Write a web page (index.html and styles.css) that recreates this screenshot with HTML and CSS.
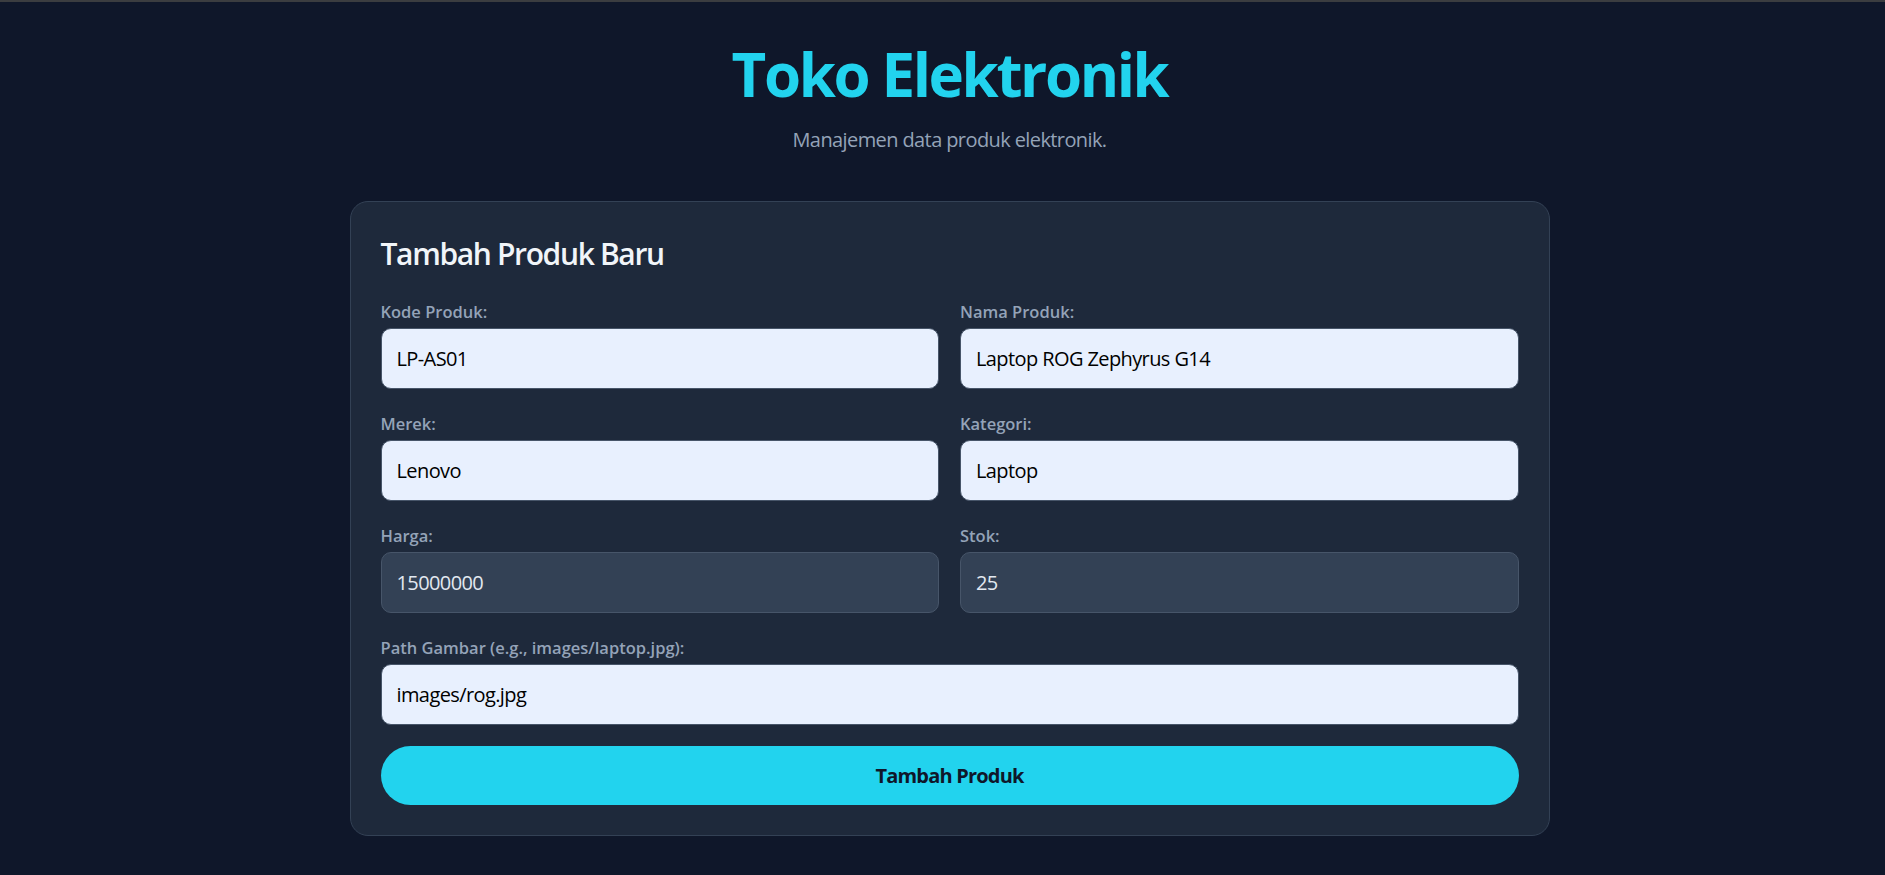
FILE: index.html
```html
<!DOCTYPE html>
<html lang="id">
<head>
<meta charset="utf-8">
<title>Toko Elektronik</title>
<link rel="stylesheet" href="styles.css">
</head>
<body>
<div class="page">
  <header class="header">
    <h1 class="title">Toko Elektronik</h1>
    <p class="subtitle">Manajemen data produk elektronik.</p>
  </header>
  <main class="card">
    <h2 class="card-title">Tambah Produk Baru</h2>
    <form class="form">
      <div class="field">
        <label class="label" for="kode">Kode Produk:</label>
        <input class="input input-filled" id="kode" type="text" value="LP-AS01">
      </div>
      <div class="field">
        <label class="label" for="nama">Nama Produk:</label>
        <input class="input input-filled" id="nama" type="text" value="Laptop ROG Zephyrus G14">
      </div>
      <div class="field">
        <label class="label" for="merek">Merek:</label>
        <input class="input input-filled" id="merek" type="text" value="Lenovo">
      </div>
      <div class="field">
        <label class="label" for="kategori">Kategori:</label>
        <input class="input input-filled" id="kategori" type="text" value="Laptop">
      </div>
      <div class="field">
        <label class="label" for="harga">Harga:</label>
        <input class="input input-dark" id="harga" type="text" value="15000000">
      </div>
      <div class="field">
        <label class="label" for="stok">Stok:</label>
        <input class="input input-dark" id="stok" type="text" value="25">
      </div>
      <div class="field field-wide">
        <label class="label" for="gambar">Path Gambar (e.g., images/laptop.jpg):</label>
        <input class="input input-filled" id="gambar" type="text" value="images/rog.jpg">
      </div>
      <button class="button" type="button">Tambah Produk</button>
    </form>
  </main>
</div>
</body>
</html>
```
FILE: styles.css
```css
* {
  box-sizing: border-box;
}

html, body {
  margin: 0;
  padding: 0;
}

body {
  background: #0f172a;
  border-top: 2px solid #3b3d40;
  font-family: "Open Sans", "Noto Sans", sans-serif;
  color: #e2e8f0;
  min-height: 875px;
}

.page {
  padding: 0 0 40px 14px;
}

.header {
  text-align: center;
  padding-top: 36px;
}

.title {
  margin: 0;
  font-size: 60px;
  line-height: 72px;
  font-weight: 700;
  color: #22d3ee;
  letter-spacing: -2.4px;
}

.subtitle {
  margin: 15px 0 0;
  font-size: 20px;
  line-height: 30px;
  color: #94a3b8;
  letter-spacing: -0.6px;
}

.card {
  width: 1200px;
  margin: 46px auto 0;
  background: #1e293b;
  border: 1px solid #334155;
  border-radius: 18px;
  padding: 30px;
}

.card-title {
  margin: 3px 0 27px;
  font-size: 30px;
  line-height: 37.5px;
  font-weight: 600;
  color: #f1f5f9;
  letter-spacing: -1.35px;
}

.form {
  display: grid;
  grid-template-columns: 1fr 1fr;
  column-gap: 21px;
  row-gap: 23px;
}

.field {
  display: flex;
  flex-direction: column;
}

.field-wide {
  grid-column: 1 / -1;
}

.label {
  display: block;
  margin-bottom: 4px;
  font-size: 16.5px;
  line-height: 24px;
  font-weight: 600;
  color: #94a3b8;
  letter-spacing: 0;
}

.input {
  width: 100%;
  height: 61px;
  padding: 0 15px;
  border: 1px solid #475569;
  border-radius: 10px;
  font-family: inherit;
  font-size: 20px;
  letter-spacing: -0.6px;
  outline: none;
}

.input-filled {
  background: #e8f0fe;
  color: #000;
}

.input-dark {
  background: #334155;
  color: #e2e8f0;
}

.button {
  grid-column: 1 / -1;
  margin-top: -2px;
  height: 59px;
  border: none;
  border-radius: 9999px;
  background: #22d3ee;
  color: #0f172a;
  font-family: inherit;
  font-size: 20px;
  font-weight: 700;
  letter-spacing: -0.8px;
  cursor: pointer;
}
```
